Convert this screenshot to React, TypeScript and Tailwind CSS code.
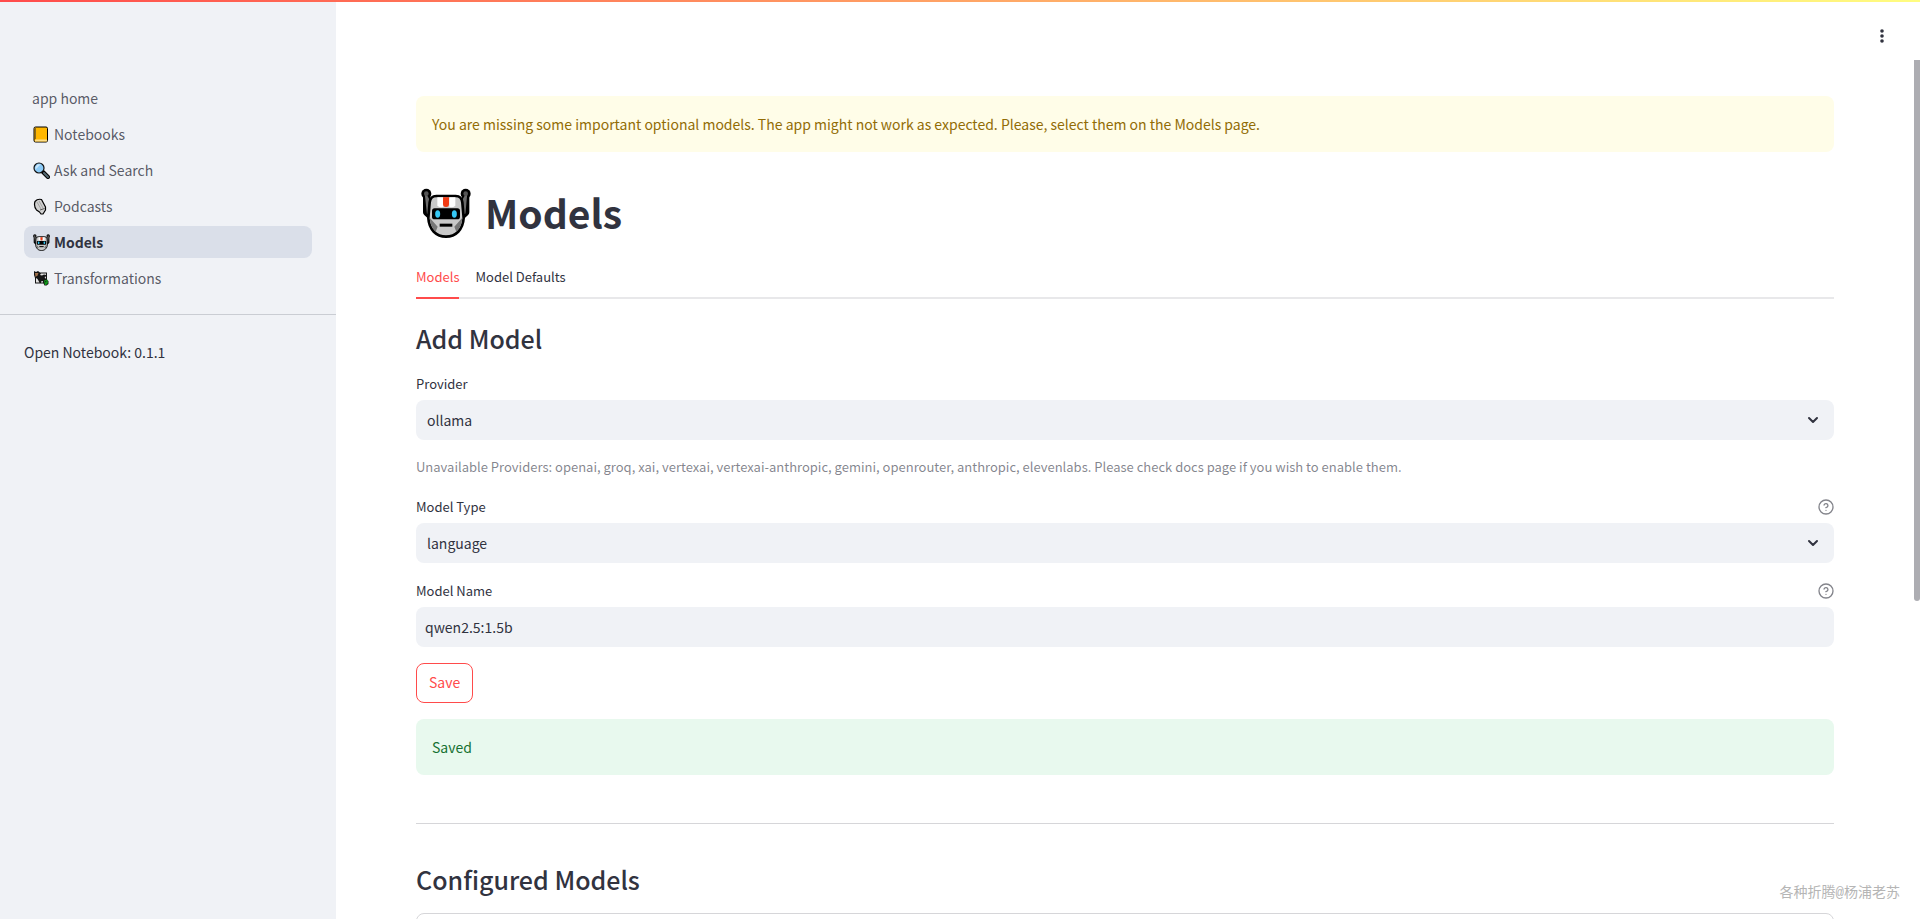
import React, { useState } from 'react';

interface NavItem {
  label: string;
  icon?: React.ReactNode;
  active?: boolean;
}

const RobotIcon = ({ className }: { className: string }) => (
  <svg viewBox="34 25 150 150" className={className} aria-hidden="true">
    <g stroke="#000" strokeWidth="22" strokeLinecap="round" strokeLinejoin="round" fill="none">
      <path d="M51 52 51 98 60 106" />
      <path d="M168 52 168 98 159 106" />
    </g>
    <circle cx="50" cy="42" r="15" />
    <circle cx="168" cy="42" r="15" />
    <path d="M48 44 54 100 62 104 62 70z" fill="#6b6b6b" stroke="#6b6b6b" strokeWidth="5" />
    <path d="M170 44 165 100 156 104 156 70z" fill="#6b6b6b" stroke="#6b6b6b" strokeWidth="5" />
    <circle cx="50" cy="42" r="7" fill="#555" />
    <circle cx="168" cy="42" r="7" fill="#555" />
    <path
      d="M80 49H138Q156 49 158 68L162 115C160 150 138 171 109 171S58 150 56 115L60 68Q62 49 80 49z"
      fill="#c9c9c9"
      stroke="#000"
      strokeWidth="8"
    />
    <path d="M83 53H101V82Q90 84 83 78zM119 53H137V78Q130 84 119 82z" fill="#fff" />
    <path d="M60 114 84 141 78 156Q62 142 60 114zM158 114 134 141 140 156Q156 142 158 114z" fill="#777" />
    <path d="M100 53H118V73Q118 82 109 82T100 73z" fill="#f13b14" />
    <rect x="67" y="86" width="84" height="33" rx="8" />
    <ellipse cx="84" cy="103" rx="7.5" ry="11" fill="#35c8f5" />
    <ellipse cx="134" cy="103" rx="7.5" ry="11" fill="#35c8f5" />
    <rect x="90" y="132" width="38" height="9" />
  </svg>
);

const NotebookIcon = () => (
  <svg viewBox="0 0 17 17" className="size-[17px]" aria-hidden="true">
    <rect x="1" y="1" width="13.5" height="15" rx="1.5" fill="#ffb700" stroke="#000" />
    <path d="M3 13.5H14V15.5H2Q1.5 14 3 13.5z" fill="#ffe08a" />
    <path d="M2.5 1.5V13" stroke="#8a6a20" />
  </svg>
);

const SearchIcon = () => (
  <svg viewBox="0 0 17 17" className="size-[17px]" aria-hidden="true">
    <path d="M10 10 15 15" stroke="#000" strokeWidth="4" strokeLinecap="round" />
    <path d="M11 11 15 15" stroke="#566b75" strokeWidth="2" strokeLinecap="round" />
    <circle cx="6" cy="6" r="5" fill="#8ccbf7" stroke="#111" strokeWidth="1.2" />
    <path d="M2.5 7.5A4 4 0 0 1 7.5 2.5z" fill="#c8e6fb" />
  </svg>
);

const MicIcon = () => (
  <svg viewBox="0 0 17 17" className="size-[17px]" aria-hidden="true">
    <path
      d="M2 3.5Q4.5 .5 8.5 1.5L12.5 9V12L10 16H8L6.5 14 3.5 12Q.5 8 2 3.5z"
      fill="#d0d0d0"
      stroke="#000"
      strokeWidth="1.2"
      strokeLinejoin="round"
    />
    <path d="M4 4 8 11M6 3 10 10" stroke="#a3a3a3" />
    <path d="M7 12 11.5 10.5" stroke="#555" />
  </svg>
);

const TransformIcon = () => (
  <svg viewBox="0 0 17 17" className="size-[17px]" aria-hidden="true">
    <path d="M1 1 3 2 5 1 7 2.5H14V10L15.500 11V14L13.500 15.500H11.500L10.500 13.500H2V8L1 5z" fill="#151515" />
    <path d="M2 3H5.500L4.500 5.500 2.500 7z" fill="#a0704a" />
    <path d="M8 3.500H13V5L11 4.500 9 5.500 7 5zM3 8 4.500 9 6.500 12.500H3zM11.500 7 13 6.500V9zM8 11.500 10 11V12.500H8z" fill="#e4e4e4" />
    <path d="M11 10.500 14.500 9.500 15 13 13 15H12L11.500 13z" fill="#0f9a1a" />
    <path d="M12 12 13.500 11" stroke="#111" strokeWidth=".8" />
  </svg>
);

const Chevron = () => (
  <svg viewBox="0 0 20 20" className="pointer-events-none absolute top-2.5 right-[11px] size-5" aria-hidden="true">
    <path d="M6 8 10 12 14 8" fill="none" stroke="#31333f" strokeWidth="2" strokeLinecap="round" strokeLinejoin="round" />
  </svg>
);

const HelpButton = ({ label }: { label: string }) => (
  <button type="button" aria-label={label} className="text-[#83848b]">
    <svg viewBox="0 0 24 24" className="size-4" fill="none" stroke="currentColor" strokeWidth="2" strokeLinecap="round">
      <circle cx="12" cy="12" r="10.5" />
      <path d="M9.09 9a3 3 0 0 1 5.83 1c0 2-3 3-3 3M12 17h.01" />
    </svg>
  </button>
);

const navItems: NavItem[] = [
  { label: 'app home' },
  { label: 'Notebooks', icon: <NotebookIcon /> },
  { label: 'Ask and Search', icon: <SearchIcon /> },
  { label: 'Podcasts', icon: <MicIcon /> },
  { label: 'Models', icon: <RobotIcon className="size-[17px]" />, active: true },
  { label: 'Transformations', icon: <TransformIcon /> },
];

const Sidebar = () => (
  <aside className="w-[336px] shrink-0 bg-[#f0f2f6] pt-[82px]">
    <nav className="flex flex-col gap-1 px-6">
      {navItems.map((item) => (
        <a
          key={item.label}
          href="#"
          className={
            item.active
              ? 'flex h-8 items-center rounded-lg bg-[#dadfe9] px-2 font-bold'
              : 'flex h-8 items-center rounded-lg px-2 text-[#31333f]/80'
          }
        >
          {item.icon && <span className="mr-1 ml-px">{item.icon}</span>}
          <span>{item.label}</span>
        </a>
      ))}
    </nav>
    <hr className="mt-5 border-[#cacdd3]" />
    <p className="mt-[25px] px-6 leading-6">Open Notebook: 0.1.1</p>
  </aside>
);

interface FieldProps {
  id: string;
  label: string;
  help?: boolean;
  children: React.ReactNode;
}

const Field = ({ id, label, help, children }: FieldProps) => (
  <div>
    <div className="mb-1 flex h-6 items-center justify-between">
      <label htmlFor={id} className="text-[13px]">
        {label}
      </label>
      {help && <HelpButton label={`Help for ${label}`} />}
    </div>
    <div className="relative">{children}</div>
  </div>
);

const controlClass = 'block h-10 w-full appearance-none rounded-lg bg-[#f0f2f6] outline-none';
const headingClass = 'pt-[22px] pb-[17px] text-[25px] leading-[34px] font-medium';

export default function App() {
  const [provider, setProvider] = useState('ollama');
  const [modelType, setModelType] = useState('language');
  const [modelName, setModelName] = useState('qwen2.5:1.5b');

  return (
    <div className="relative flex h-screen overflow-hidden bg-white font-['Noto_Sans_CJK_SC',sans-serif] text-[14px] text-[#31333f]">
      <div className="absolute inset-x-0 top-0 z-10 h-0.5 bg-linear-to-r/srgb from-[#ff4b4b] to-[#fffd80]" />
      <Sidebar />

      <main className="min-w-0 flex-1 overflow-hidden pt-24 pr-[86px] pl-20">
        <div role="alert" className="rounded-lg bg-[#fffde8] p-4 leading-6 text-[#926c05]">
          You are missing some important optional models. The app might not work as expected. Please, select them on the Models page.
        </div>

        <h1 className="mt-9 mb-[19px] flex h-13 items-start gap-3.5 pl-[5px] text-[39px] leading-12 font-bold">
          <RobotIcon className="size-[50px]" />
          Models
        </h1>

        <div role="tablist" className="flex h-10 gap-4 border-b-2 border-[#e8e8ea] text-[13px]">
          <button role="tab" aria-selected="true" className="-mb-0.5 border-b-2 border-[#ff4b4b] pb-0.5 text-[#ff4b4b]">
            Models
          </button>
          <button role="tab" aria-selected="false" className="pb-0.5">
            Model Defaults
          </button>
        </div>

        <h2 className={headingClass}>Add Model</h2>

        <form className="flex flex-col gap-4" onSubmit={(e) => e.preventDefault()}>
          <Field id="provider" label="Provider">
            <select
              id="provider"
              value={provider}
              onChange={(e) => setProvider(e.target.value)}
              className={`${controlClass} px-[11px]`}
            >
              <option>ollama</option>
            </select>
            <Chevron />
          </Field>

          <p className="pb-0.5 text-[13px] leading-[21px] text-[#31333f]/60">
            Unavailable Providers: openai, groq, xai, vertexai, vertexai-anthropic, gemini, openrouter, anthropic, elevenlabs. Please check docs page if you wish to enable them.
          </p>

          <Field id="model-type" label="Model Type" help>
            <select
              id="model-type"
              value={modelType}
              onChange={(e) => setModelType(e.target.value)}
              className={`${controlClass} px-[11px]`}
            >
              <option>language</option>
            </select>
            <Chevron />
          </Field>

          <Field id="model-name" label="Model Name" help>
            <input
              id="model-name"
              type="text"
              value={modelName}
              onChange={(e) => setModelName(e.target.value)}
              className={`${controlClass} px-[9px]`}
            />
          </Field>

          <button type="submit" className="h-10 self-start rounded-lg border border-[#ff4b4b] px-3 pb-0.5 text-[#ff4b4b]">
            Save
          </button>

          <div role="status" className="rounded-lg bg-[#e8f9ee] p-4 leading-6 text-[#177233]">
            Saved
          </div>
        </form>

        <hr className="mt-12 mb-4 border-[#d6d6d9]" />

        <h2 className={headingClass}>Configured Models</h2>
        <section className="h-40 rounded-lg border border-[#d6d6d9]" />
      </main>

      <button type="button" aria-label="Main menu" className="absolute top-[26px] right-7 text-[#31333f]">
        <svg viewBox="0 0 20 20" className="size-5" fill="currentColor">
          <circle cx="10" cy="5" r="1.8" />
          <circle cx="10" cy="10" r="1.8" />
          <circle cx="10" cy="15" r="1.8" />
        </svg>
      </button>

      {/* scrollbar */}
      <div className="absolute top-15 right-0 bottom-0 w-1.5">
        <div className="h-[63%] rounded-b-full bg-[#adadb2]" />
      </div>

      <span className="absolute right-5 bottom-[15px] font-['Liberation_Mono','Noto_Sans_CJK_SC',monospace] text-[14px] text-[#b5b5b5]">
        各种折腾@杨浦老苏
      </span>
    </div>
  );
}
